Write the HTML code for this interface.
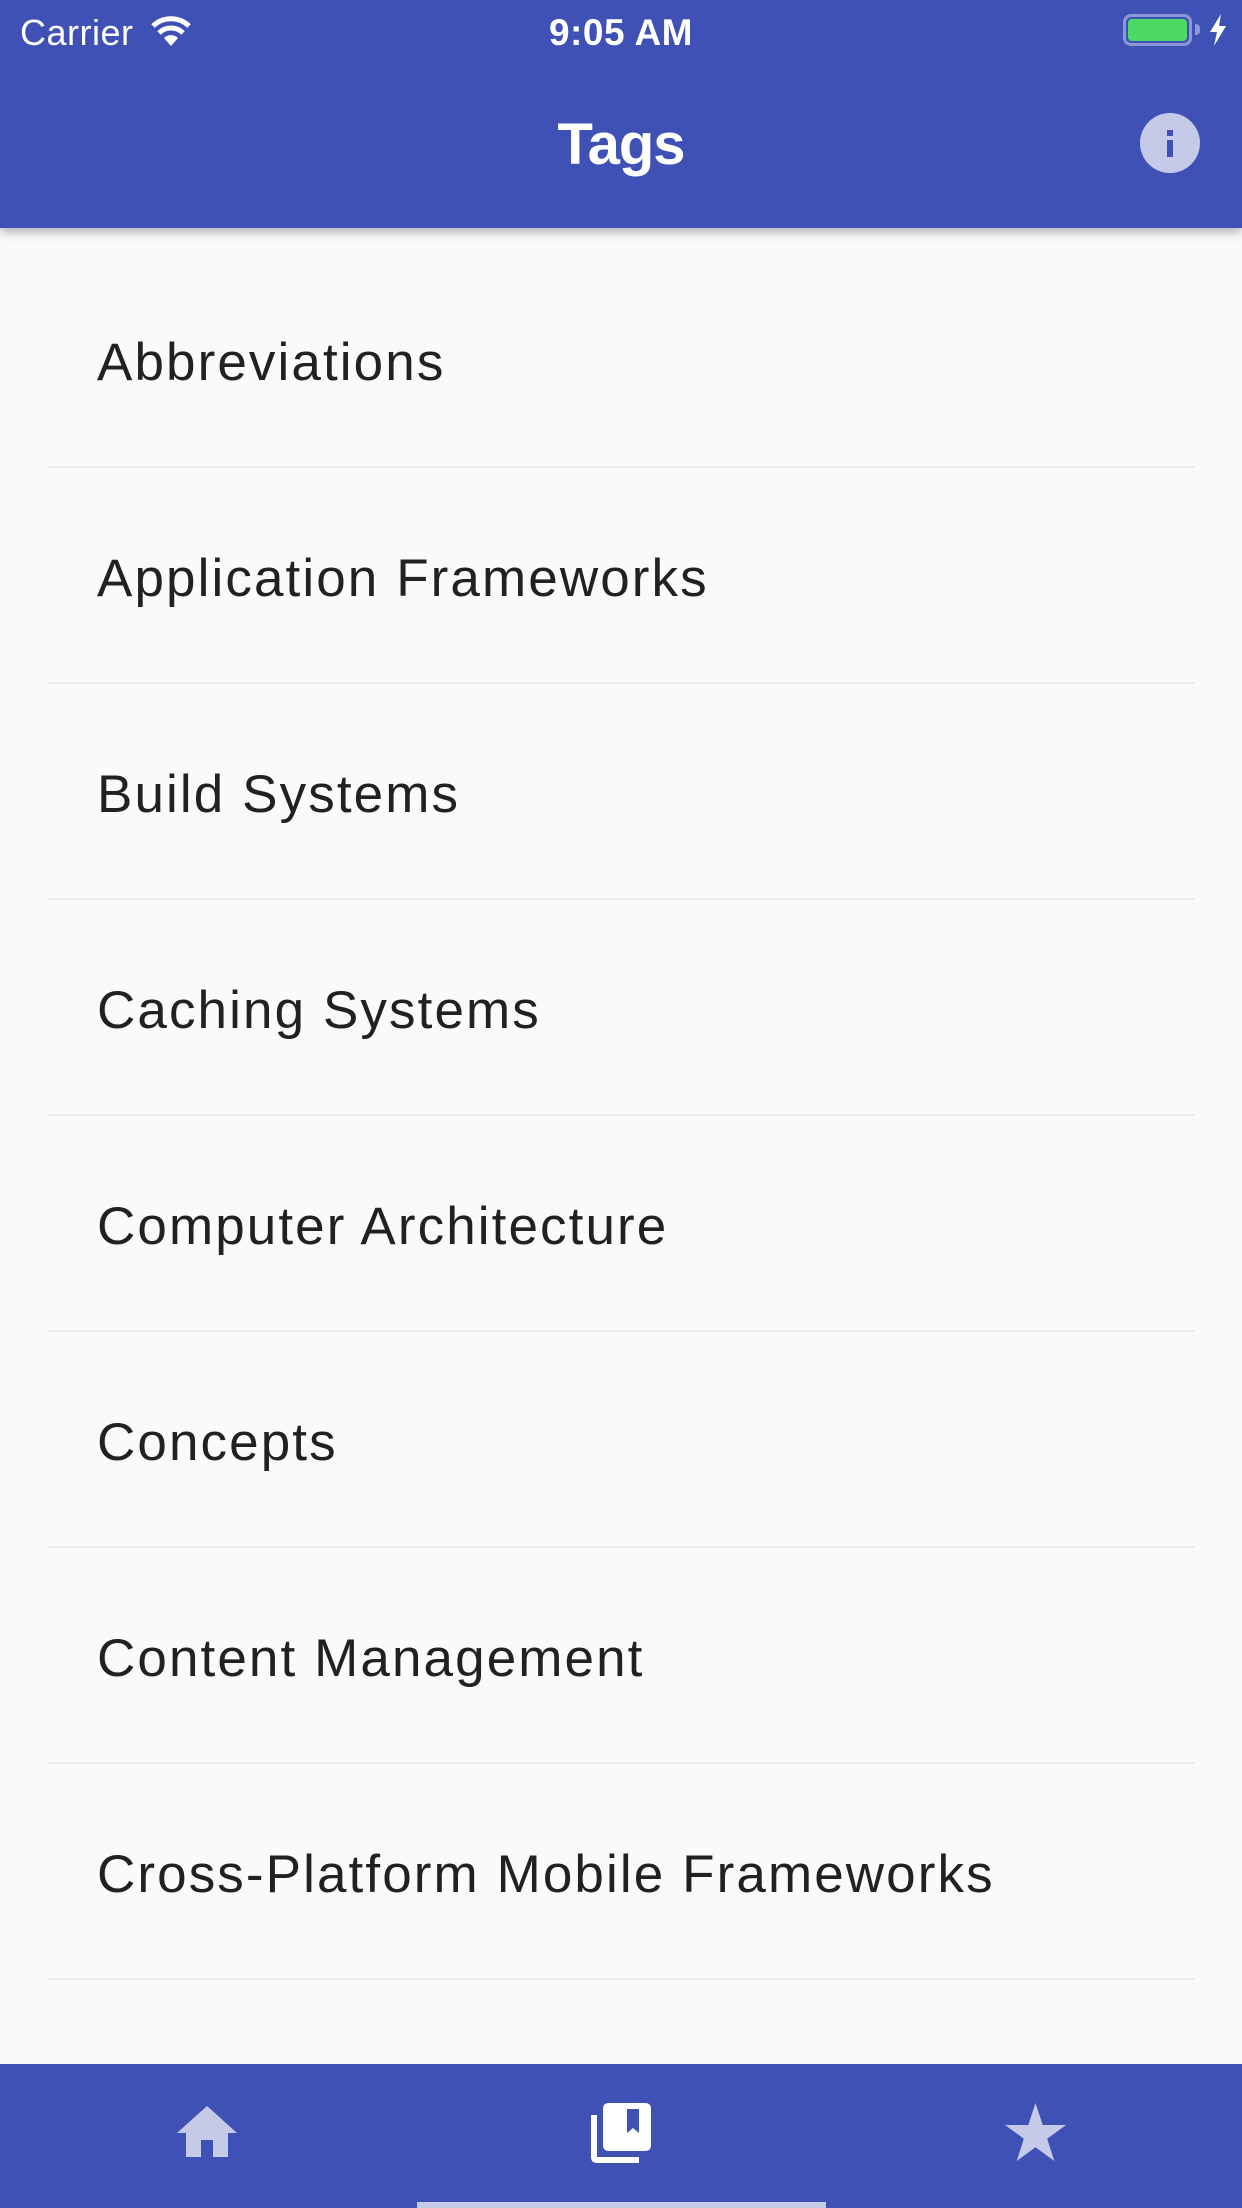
<!DOCTYPE html>
<html><head><meta charset="utf-8"><style>
*{margin:0;padding:0;box-sizing:border-box}
body{width:1242px;height:2208px;background:#fafafa;position:relative;overflow:hidden;font-family:"Liberation Sans",sans-serif}
.top{position:absolute;left:0;top:0;width:1242px;height:228px;background:#3f51b5;box-shadow:0 4px 10px rgba(0,0,0,0.3);z-index:2}
.st{position:absolute;color:#fff;font-size:36px;line-height:1}
.title{position:absolute;left:0;width:1242px;top:116px;text-align:center;color:#fff;font-size:58px;line-height:1;font-weight:bold;letter-spacing:-1px}
.row{position:absolute;left:0;width:1242px;height:216px}
.row span{position:absolute;left:97px;top:84px;font-size:53px;line-height:1;color:#212121;letter-spacing:2.1px;white-space:nowrap}
.row i{position:absolute;left:49px;right:48px;bottom:0;height:2px;background:#ebebeb}
.bot{position:absolute;left:0;top:2064px;width:1242px;height:144px;background:#3f51b5}
</style></head><body>
<div class="top">
  <div class="st" style="left:20px;top:15px;letter-spacing:0.5px">Carrier</div>
  <svg style="position:absolute;left:150px;top:14px" width="42" height="32" viewBox="0 0 42 32">
    <path d="M21 32 L14 24 A10 10 0 0 1 28 24 Z" fill="#fff"/>
    <path d="M9 19 A17 17 0 0 1 33 19" stroke="#fff" stroke-width="5" fill="none"/>
    <path d="M3 12 A26 26 0 0 1 39 12" stroke="#fff" stroke-width="5" fill="none"/>
  </svg>
  <div class="st" style="left:0;width:1242px;text-align:center;top:14px;font-size:37px;font-weight:bold;letter-spacing:0.5px">9:05 AM</div>
  <div style="position:absolute;left:1123px;top:14px;width:69px;height:32px;border:3px solid #8c97d6;border-radius:8px"></div>
  <div style="position:absolute;left:1128px;top:19px;width:59px;height:22px;background:#4cd964;border-radius:4px"></div>
  <div style="position:absolute;left:1195px;top:24px;width:5px;height:11px;background:#8c97d6;border-radius:0 4px 4px 0"></div>
  <svg style="position:absolute;left:1209px;top:14px" width="18" height="32" viewBox="0 0 18 32"><path d="M12 0 L1 18 L8 18 L5 32 L17 12 L10 12 Z" fill="#fff"/></svg>
  <div class="title">Tags</div>
  <svg style="position:absolute;left:1140px;top:113px" width="60" height="60" viewBox="0 0 60 60">
    <circle cx="30" cy="30" r="30" fill="#c5cae9"/>
    <rect x="27" y="17" width="6" height="6" fill="#3f51b5"/>
    <rect x="27" y="27" width="6" height="17" fill="#3f51b5"/>
  </svg>
</div>

<div class="row" style="top:252px"><span>Abbreviations</span><i></i></div>
<div class="row" style="top:468px"><span>Application Frameworks</span><i></i></div>
<div class="row" style="top:684px"><span>Build Systems</span><i></i></div>
<div class="row" style="top:900px"><span>Caching Systems</span><i></i></div>
<div class="row" style="top:1116px"><span>Computer Architecture</span><i></i></div>
<div class="row" style="top:1332px"><span>Concepts</span><i></i></div>
<div class="row" style="top:1548px"><span>Content Management</span><i></i></div>
<div class="row" style="top:1764px"><span>Cross-Platform Mobile Frameworks</span><i></i></div>

<div class="bot">
  <svg style="position:absolute;left:177px;top:42px" width="60" height="52" viewBox="0 0 60 52">
    <path d="M30 0 L60 27 L51 27 L51 51 L36 51 L36 34 L24 34 L24 51 L9 51 L9 27 L0 27 Z" fill="#c5cae9"/>
  </svg>
  <svg style="position:absolute;left:591px;top:39px" width="60" height="60" viewBox="0 0 60 60">
    <path d="M0 12 L6 12 L6 54 L48 54 L48 60 L6 60 Q0 60 0 54 Z" fill="#fff"/>
    <path d="M18 0 L54 0 Q60 0 60 6 L60 42 Q60 48 54 48 L18 48 Q12 48 12 42 L12 6 Q12 0 18 0 Z" fill="#fff"/>
    <path d="M36 6 L48 6 L48 30 L42 25 L36 30 Z" fill="#3f51b5"/>
  </svg>
  <svg style="position:absolute;left:1005px;top:39px" width="61" height="58" viewBox="0 0 61 58">
    <path d="M30.5 0 L37.7 22 L61 22 L42.2 35.7 L49.3 58 L30.5 44.3 L11.7 58 L18.8 35.7 L0 22 L23.3 22 Z" fill="#c5cae9"/>
  </svg>
  <div style="position:absolute;left:417px;top:138px;width:409px;height:6px;background:#c5cae9"></div>
</div>
</body></html>
